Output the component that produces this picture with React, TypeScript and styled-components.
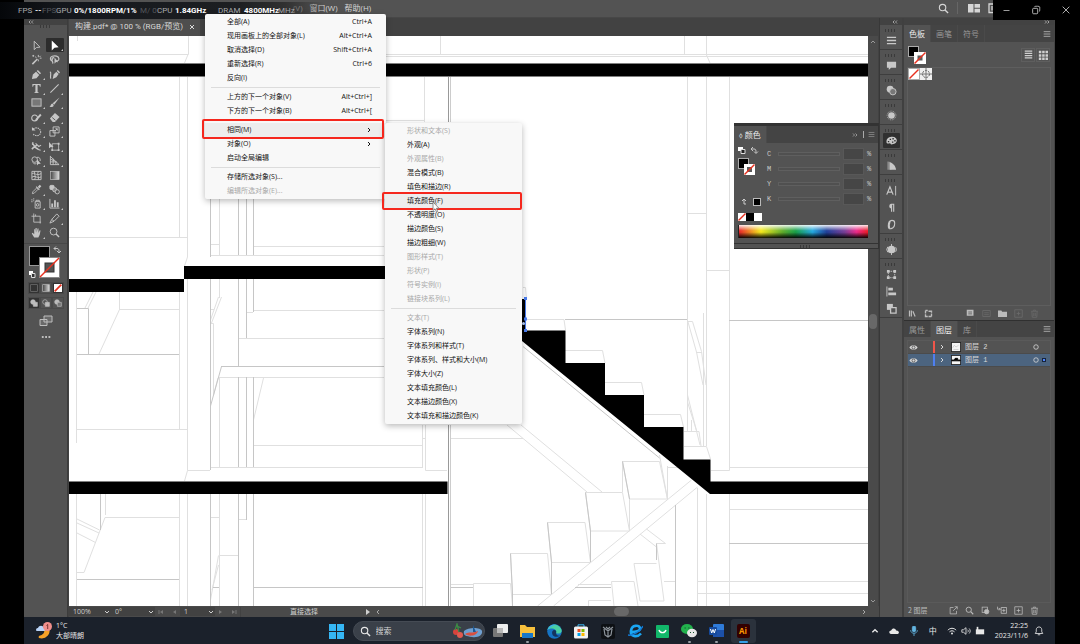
import React from "react";
import styled, { createGlobalStyle } from "styled-components";

const uiFont = '"Open Sans", "Noto Sans CJK SC", sans-serif';
const cjkFont = '"Noto Sans CJK SC", sans-serif';

const Global = createGlobalStyle`
  *, *::before, *::after { box-sizing: border-box; }
  html, body { margin: 0; padding: 0; background: #000; overflow: hidden; }
  body { font-family: ${uiFont}; font-size: 8px; line-height: 12px; color: #c8c8c8; }
  button, input, select { font: inherit; color: inherit; border: 0; padding: 0; margin: 0; background: none; }
  ul { list-style: none; margin: 0; padding: 0; }
  svg { display: block; flex: none; }
`;

/* ---------- shell ---------- */

const Desktop = styled.div`
  position: relative;
  display: flex;
  flex-direction: column;
  height: 100vh;
  padding: 0 25px 0 24px;
  background: #000;
`;

const MenuBar = styled.header`
  flex: none;
  display: flex;
  align-items: center;
  height: 18px;
  padding: 0 55px 1px 269px;
  gap: 7px;
  background: #535353;
  border-bottom: 1px solid #474747;
  color: #d6d6d6;
`;

const MenuTitle = styled.button`
  font-size: 8px;
  line-height: 12px;
  white-space: nowrap;
`;

const MenuBarTools = styled.div`
  display: flex;
  align-items: center;
  gap: 8px;
  margin-left: auto;
`;

const Rule = styled.span`
  width: 1px;
  height: 12px;
  margin: 0 2px 0 0;
  background: #666;
`;

const WindowControls = styled.div`
  position: absolute;
  top: 0;
  right: 0;
  display: flex;
  justify-content: space-between;
  align-items: center;
  width: 87px;
  height: 20px;
  padding: 0 9px;
  background: #000;
  color: #d0d0d0;
`;

const IconButton = styled.button`
  display: flex;
  align-items: center;
  justify-content: center;
`;

const Monitor = styled.div`
  position: absolute;
  z-index: 5;
  top: 2px;
  left: 0;
  display: flex;
  align-items: center;
  width: 330px;
  height: 17px;
  padding-left: 18px;
  background: linear-gradient(90deg, #05070a 0, #14171c 60px, #1d1f22 240px, rgba(40, 40, 40, 0.8) 285px, rgba(83, 83, 83, 0) 325px);
  font: 8px/12px Roboto, sans-serif;
  white-space: nowrap;
`;

const Reading = styled.span<{ $w: number; $tone?: "value" | "faint" }>`
  flex: none;
  width: ${(p) => p.$w}px;
  color: ${(p) => (p.$tone === "value" ? "#fff" : p.$tone === "faint" ? "#54575c" : "#a9abad")};
  font-weight: ${(p) => (p.$tone === "value" ? 700 : 400)};
`;

const Workspace = styled.div`
  flex: 1;
  min-height: 0;
  display: grid;
  grid-template-columns: 44px minmax(0, 1fr) 25px 151px;
  background: #535353;
`;

/* ---------- tool bar ---------- */

const ToolBar = styled.aside`
  display: flex;
  flex-direction: column;
  align-items: center;
  background: #535353;
  border-right: 1px solid #3c3c3c;
`;

const Collapse = styled.div<{ $right?: boolean }>`
  align-self: stretch;
  display: flex;
  align-items: center;
  justify-content: ${(p) => (p.$right ? "flex-end" : "flex-start")};
  height: 7px;
  padding: 0 4px;
  background: #424242;
  color: #bbb;
`;

const Grip = styled.div`
  width: 12px;
  height: 3px;
  background: repeating-linear-gradient(90deg, #3a3a3a 0 1px, transparent 1px 3px);
`;

const ToolGrid = styled.div`
  display: grid;
  grid-template-columns: 18px 18px;
  grid-template-rows: repeat(14, 1fr);
  height: 202px;
  margin-top: 10px;
`;

const Tool = styled.button<{ $active?: boolean }>`
  position: relative;
  display: flex;
  align-items: center;
  justify-content: center;
  border-radius: 1px;
  background: ${(p) => (p.$active ? "#2c2c2c" : "transparent")};
  color: ${(p) => (p.$active ? "#fff" : "#c6c6c6")};
`;

const Corner = styled.span`
  position: absolute;
  right: 1px;
  bottom: 1px;
  border: 1px solid transparent;
  border-right-color: #c6c6c6;
  border-bottom-color: #c6c6c6;
`;

const Inks = styled.div`
  align-self: stretch;
  margin-top: 3px;
  padding: 1px 4px 0;
  border-top: 1px solid #474747;
`;

const Row3 = styled.div`
  display: grid;
  grid-template-columns: repeat(3, 12px);
  height: 12px;
  margin-top: 3px;
`;

const Mode = styled.button<{ $on?: boolean }>`
  display: flex;
  align-items: center;
  justify-content: center;
  border: 1px solid #4a4a4a;
  background: ${(p) => (p.$on ? "#333" : "transparent")};
  color: #bdbdbd;
`;

const ToolExtra = styled.button`
  height: 12px;
  margin-top: 5px;
  color: #bdbdbd;
`;

/* ---------- document ---------- */

const Document = styled.main`
  display: flex;
  flex-direction: column;
  min-width: 0;
  min-height: 0;
  padding-left: 1px;
  background: #424242;
`;

const Tabs = styled.div`
  flex: none;
  display: flex;
  height: 18px;
`;

const DocTab = styled.div`
  display: flex;
  align-items: center;
  gap: 6px;
  padding: 0 5px 0 6px;
  background: #4e4e4e;
  color: #d8d8d8;
  font: 8px/12px Roboto, "Noto Sans CJK SC", sans-serif;
  white-space: nowrap;
`;

const View = styled.div`
  flex: 1;
  min-height: 0;
  display: grid;
  grid-template-columns: minmax(0, 1fr) 10px;
  margin-right: 1px;
`;

const Artboard = styled.svg`
  width: 100%;
  height: 100%;
  min-height: 0;
  background: #fff;
`;

const ScrollBar = styled.div`
  display: flex;
  flex-direction: column;
  align-items: center;
  justify-content: space-between;
  padding: 3px 0 2px;
  background: #4a4a4a;
  color: #999;
`;

const Thumb = styled.span<{ $w: number; $h: number }>`
  width: ${(p) => p.$w}px;
  height: ${(p) => p.$h}px;
  border-radius: 5px;
  background: #686868;
`;

const StatusBar = styled.div`
  flex: none;
  display: flex;
  align-items: center;
  height: 11px;
  background: #4a4a4a;
  color: #d0d0d0;
  font: 7px/10px ${uiFont};
`;

const Field = styled.label<{ $w: number }>`
  display: flex;
  align-items: center;
  justify-content: space-between;
  width: ${(p) => p.$w}px;
  height: 9px;
  padding: 0 1px 0 4px;
  background: #424242;

  select { appearance: none; flex: 1; min-width: 0; line-height: 9px; }
`;

const Pager = styled.div`
  display: flex;
  justify-content: space-around;
  width: 25px;
  color: #777;
`;

const ToolName = styled.div`
  width: 125px;
  padding-left: 2px;
  text-align: center;
  border-left: 1px solid #424242;
`;

const HScroll = styled.div`
  flex: 1;
  display: flex;
  align-items: center;
  justify-content: space-between;
  padding: 0 12px 0 4px;
  color: #aaa;
`;

/* ---------- dock and panels ---------- */

const Dock = styled.nav`
  display: flex;
  flex-direction: column;
  background: #535353;
  border-left: 1px solid #383838;
  border-right: 2px solid #404040;
`;

const DockGroup = styled.div`
  display: flex;
  flex-direction: column;
  align-items: center;
  padding-top: 4px;
  border-bottom: 1px solid #3e3e3e;
`;

const DockButton = styled.button<{ $on?: boolean }>`
  display: flex;
  align-items: center;
  justify-content: center;
  width: 17px;
  height: 15px;
  margin: 1px 0;
  border-radius: 1px;
  background: ${(p) => (p.$on ? "#303030" : "transparent")};
  color: #c8c8c8;
`;

const Panels = styled.aside`
  display: flex;
  flex-direction: column;
  min-height: 0;
  border-right: 1px solid #444;
`;

const PanelTabs = styled.div`
  flex: none;
  display: flex;
  align-items: stretch;
  height: 17px;
  padding-right: 3px;
  background: #444;
`;

const PanelTab = styled.button<{ $on?: boolean }>`
  padding: 0 5px;
  font: 8px/15px ${cjkFont};
  background: ${(p) => (p.$on ? "#535353" : "transparent")};
  color: ${(p) => (p.$on ? "#ececec" : "#999")};
  border-right: 1px solid #4a4a4a;
`;

const PanelMenu = styled.button`
  margin-left: auto;
  align-self: center;
  color: #aaa;
`;

const FloatMenu = styled.button`
  align-self: center;
  margin-left: 5px;
  padding-left: 4px;
  border-left: 1px solid #aaa;
  color: #888;
`;

const SwatchHead = styled.div`
  display: flex;
  align-items: center;
  height: 25px;
  padding: 0 4px 0 4px;
  gap: 1px;
`;

const ViewButton = styled.button`
  display: flex;
  align-items: center;
  justify-content: center;
  width: 14px;
  height: 14px;
  border: 1px solid #5e5e5e;
  color: #d0d0d0;
`;

const Spacer = styled.span`
  flex: 1;
`;

const SwatchList = styled.div`
  display: flex;
  align-items: flex-start;
  height: 239px;
  margin: 0 3px;
  border: 1px solid #5e5e5e;
`;

const PanelFooter = styled.div<{ $gap: number }>`
  flex: none;
  display: flex;
  align-items: center;
  justify-content: flex-end;
  gap: ${(p) => p.$gap}px;
  height: 14px;
  padding: 0 15px 0 4px;
  color: #bcbcbc;
  font: 7px/12px ${cjkFont};
`;

const Faded = styled.span`
  color: #6c6c6c;
`;

const LayerTabs = styled(PanelTabs)`
  border-top: 1px solid #303030;
`;

const LayerList = styled.ul`
  flex: 1;
  margin: 3px 3px 0;
  border: 1px solid #5a5a5a;
`;

const Layer = styled.li<{ $on?: boolean }>`
  display: grid;
  grid-template-columns: 24px 6px 12px 1fr auto;
  align-items: center;
  height: 13px;
  padding: 0 0 0 1px;
  background: ${(p) => (p.$on ? "#4c647f" : "transparent")};
  border-bottom: 1px solid #4b4b4b;
  color: #d8d8d8;
  font: 7px/12px "Liberation Mono", ${cjkFont};
`;

const LayerColor = styled.span<{ $c: string }>`
  width: 2px;
  height: 12px;
  background: ${(p) => p.$c};
`;

const ThumbWrap = styled.span`
  display: flex;
  align-items: center;
  gap: 4px;
`;

const Targets = styled.span`
  display: flex;
  align-items: center;
  gap: 3px;
  width: 17px;
`;

const Selected = styled.span`
  width: 4px;
  height: 4px;
  border: 1px solid #16243c;
  background: #4f86ff;
`;

/* ---------- floating colour panel ---------- */

const ColorPanel = styled.section`
  position: absolute;
  top: 123px;
  right: 201px;
  width: 145px;
  height: 126px;
  display: flex;
  flex-direction: column;
  background: #535353;
  border-top: 3px solid #333;
  border-right: 1px solid #333;
  border-bottom: 1px solid #333;
`;

const ColorBody = styled.div`
  flex: 1;
  display: grid;
  grid-template-columns: 29px 1fr;
  padding: 3px 7px 0 4px;
`;

const Channels = styled.div`
  display: flex;
  flex-direction: column;
`;

const Channel = styled.label`
  display: grid;
  grid-template-columns: 8px 62px 21px 1fr;
  align-items: center;
  height: 15px;
  column-gap: 3px;
  font: 7px/12px "Liberation Mono", monospace;
`;

const Slider = styled.input`
  appearance: none;
  width: 62px;
  height: 4px;
  border: 1px solid #5f5f5f;
  background: #505050;
  &::-webkit-slider-thumb { appearance: none; width: 0; height: 0; }
`;

const Amount = styled.input`
  width: 21px;
  height: 12px;
  border: 1px solid #585858;
  background: #464646;
`;

const Spectrum = styled.div`
  height: 13px;
  margin: 0 10px 5px 4px;
  border-left: 1px solid #222;
  background:
    linear-gradient(180deg, rgba(255, 255, 255, 0.9) 0, rgba(255, 255, 255, 0) 45%, rgba(0, 0, 0, 0) 55%, rgba(0, 0, 0, 0.95) 100%),
    linear-gradient(90deg, #e8262a 0, #f6ea1c 17%, #5fae2c 34%, #19a04a 44%, #25a9e0 57%, #20409a 68%, #7a3f98 82%, #ec2a8b 91%, #ed1c24 100%);
`;

const PanelFoot = styled.div`
  display: flex;
  justify-content: center;
  height: 5px;
  padding-top: 1px;
  border-top: 1px solid #333;
`;

/* ---------- drop-down menus ---------- */

const Menu = styled.div<{ $x: number; $y: number; $w: number }>`
  position: absolute;
  z-index: 6;
  top: ${(p) => p.$y}px;
  left: ${(p) => p.$x}px;
  width: ${(p) => p.$w}px;
  padding: 1px 0;
  border-radius: 2px;
  background: #f8f8f8;
  box-shadow: 0 2px 6px rgba(0, 0, 0, 0.28);
  font: 7px/14px ${uiFont};
`;

const MenuItem = styled.button<{ $on?: boolean }>`
  display: flex;
  justify-content: space-between;
  align-items: center;
  width: 100%;
  height: 14px;
  padding: 0 14px 0 22px;
  background: ${(p) => (p.$on ? "#ededed" : "transparent")};
  color: #111;
  white-space: nowrap;
  &:disabled { color: #a8a8a8; }
`;

const Separator = styled.hr`
  height: 1px;
  margin: 2px 6px;
  border: 0;
  background: #dcdcdc;
`;

const Gap = styled.div`
  height: 5px;
`;

const Marker = styled.span<{ $x: number; $y: number; $w: number; $h: number }>`
  position: absolute;
  z-index: 7;
  top: ${(p) => p.$y}px;
  left: ${(p) => p.$x}px;
  width: ${(p) => p.$w}px;
  height: ${(p) => p.$h}px;
  border: 2px solid #f5271d;
  border-radius: 2px;
  pointer-events: none;
`;

const Pointer = styled.svg`
  position: absolute;
  z-index: 8;
  top: 201px;
  left: 432px;
`;

/* ---------- task bar ---------- */

const TaskBar = styled.footer`
  flex: none;
  position: relative;
  display: flex;
  align-items: center;
  justify-content: space-between;
  height: 27px;
  padding: 1px 11px 0 12px;
  background: #1b212b;
  color: #e8e8e8;
`;

const Weather = styled.div`
  display: flex;
  align-items: center;
  gap: 3px;
  width: 260px;
  font: 7px/10px ${uiFont};
`;

const Apps = styled.div`
  position: absolute;
  left: 50%;
  top: 1px;
  display: flex;
  align-items: center;
  height: 26px;
  transform: translateX(-50%);
`;

const AppButton = styled.button<{ $on?: boolean; $dot?: boolean }>`
  position: relative;
  display: flex;
  align-items: center;
  justify-content: center;
  width: 25px;
  height: 24px;
  margin: 0 1px;
  border-radius: 3px;
  background: ${(p) => (p.$on ? "#2b323c" : "transparent")};

  &::after {
    content: "";
    position: absolute;
    bottom: 0;
    width: ${(p) => (p.$on ? 9 : 3)}px;
    height: ${(p) => (p.$on || p.$dot ? 2 : 0)}px;
    border-radius: 1px;
    background: ${(p) => (p.$on ? "#35a0e8" : "#9a9fa6")};
  }
`;

const Search = styled.label`
  display: flex;
  align-items: center;
  gap: 5px;
  width: 132px;
  height: 20px;
  margin: 0 2px 0 3px;
  padding: 0 1px 0 6px;
  border: 1px solid #454b54;
  border-radius: 10px;
  background: #3a4049;

  input { flex: 1; min-width: 0; font: 8px/12px ${cjkFont}; }
  input::placeholder { color: #d5d5d5; opacity: 1; }
`;

const Tray = styled.div`
  display: flex;
  align-items: center;
  gap: 10px;
`;

const Clock = styled.div`
  text-align: right;
  font: 7px/10px ${uiFont};
`;

const Quick = styled.div`
  display: flex;
  gap: 4px;
`;

const AiBadge = styled.span`
  width: 13px;
  height: 14px;
  border-radius: 2px;
  background: #330000;
  color: #ff9a00;
  font: 700 8px/14px "Open Sans", sans-serif;
  text-align: center;
`;

const Mic = styled.span`
  color: #63b4e0;
`;

const Bell = styled.button`
  margin-left: -4px;
`;

/* ---------- icons ---------- */

type IconProps = { size?: number; box?: number; children: React.ReactNode };

const Icon = ({ size = 12, box = 12, children }: IconProps) => (
  <svg width={size} height={size} viewBox={`0 0 ${box} ${box}`} fill="none" stroke="currentColor" strokeWidth="1" aria-hidden="true">
    {children}
  </svg>
);

const solid = { fill: "currentColor", stroke: "none" };

const Chevron = ({ d, size = 6 }: { d: "up" | "down" | "left" | "right"; size?: number }) => {
  const paths = { up: "M1 4 3 2 5 4", down: "M1 2 3 4 5 2", left: "M4 1 2 3 4 5", right: "M2 1 4 3 2 5" };
  return <Icon size={size} box={6}><path d={paths[d]} /></Icon>;
};

const Double = ({ flip }: { flip?: boolean }) => (
  <Icon size={6} box={6}>
    <path d={flip ? "M1 1.500 2.500 3 1 4.500M3.500 1.500 5 3 3.500 4.500" : "M2.500 1.500 1 3 2.500 4.500M5 1.500 3.500 3 5 4.500"} strokeWidth=".8" />
  </Icon>
);

const Lines = ({ size = 8 }: { size?: number }) => (
  <Icon size={size}><path d="M1 2.500H11M1 6H11M1 9.500H11" strokeWidth="1.400" /></Icon>
);

const Lens = ({ size = 11 }: { size?: number }) => (
  <Icon size={size}><circle cx="5" cy="5" r="3.500" strokeWidth="1.200" /><path d="M7.600 7.600 11 11" strokeWidth="1.500" /></Icon>
);

const Trash = () => <Icon size={9}><path d="M1.500 3H10.500M4.500 2.500V1.500H7.500V2.500M2.500 3.500 3 11H9L9.500 3.500M5 5V9.500M7 5V9.500" /></Icon>;

const toolIcons: { name: string; art: React.ReactNode; more?: boolean }[] = [
  { name: "选择", art: <path d="M3.500 1.300V10.500L6 8.200 9.800 7.800Z" /> },
  { name: "直接选择", art: <path d="M3 .5V11.500L6 8.500 10.500 8Z" {...solid} />, more: true },
  { name: "魔棒", art: <><path d="M1.500 11 7 5.500" strokeWidth="1.700" /><path d="M8 1V3.500M8 6V8M4.500 3 6 4M9.500 4.500H11.500M10.500 2 9.300 3.300M2.500 1V3M1.500 2H3.500" /></> },
  { name: "套索", art: <><path d="M4 8C1 7 .5 3.500 3.500 2.500S10.500 2 10.800 5 8 7.500 8 7.500M4 6.500C2.500 5 3.500 4 5.500 4M3.500 6.500C2.500 8 5 8 4 10.500" strokeWidth="1.300" /><path d="M6 3.500V10.500L7.700 8.800 10 9Z" {...solid} /></> },
  { name: "钢笔", art: <path d="M1 11 2 6 5.500 3 9 6.500 6 10ZM6.200 2.300 7.500 1 11 4.500 9.700 5.800Z" {...solid} />, more: true },
  { name: "曲率", art: <><path d="M4 11 5 6 8 3 10.500 5.500 8 9ZM8.500 2.300 9.500 1 12 3.500 11 5Z" {...solid} /><path d="M1 3C3.500 4 .5 8 2 10.500" strokeWidth="1.300" /></> },
  { name: "文字", art: <path d="M1.500 1H10.500V4H9.700C9.500 2.500 9 2.200 7.200 2.200V9.300C7.200 10.200 7.600 10.300 8.500 10.400V11H3.500V10.400C4.500 10.300 4.800 10.200 4.800 9.300V2.200C3 2.200 2.500 2.500 2.300 4H1.500Z" {...solid} />, more: true },
  { name: "直线段", art: <path d="M1.500 10.500 10.500 1.500" strokeWidth="1.200" />, more: true },
  { name: "矩形", art: <rect x="1" y="2" width="10" height="8" fill="#777" />, more: true },
  { name: "画笔", art: <><path d="M11.500 .5 5.700 8.500 4 6.700Z" {...solid} /><path d="M3.500 7C5.500 7.500 5.500 10 4 10.700 3 11.200 1.500 11 .5 10.800 2 10 1.500 7.500 3.500 7Z" {...solid} /></>, more: true },
  { name: "Shaper", art: <><circle cx="4" cy="6.500" r="3.200" strokeWidth="1.200" /><path d="M4.500 9.500 5 7.500 10 2 11.500 3.500 6.500 9Z" {...solid} /></>, more: true },
  { name: "橡皮擦", art: <><path d="M1 7 6.500 1 11.500 5.500 6.500 11H4Z" {...solid} /><path d="M3.500 6 7 9" stroke="#535353" /></>, more: true },
  { name: "旋转", art: <><path d="M2.500 3.500C5 .8 10.500 2 10.500 6.500S5 11.500 2.500 9" strokeDasharray="1.600 .9" strokeWidth="1.200" /><path d="M1 1V5H5Z" {...solid} /></>, more: true },
  { name: "比例缩放", art: <><path d="M4.500 1H11V7.500H4.500ZM1 5H6.500V11H1Z" /><path d="M6.500 5.500 9 3M7 3H9V5" /></>, more: true },
  { name: "宽度", art: <><path d="M1 3C4 3 4 9 8 8.500M1 9C3 6 5 6 6.500 4.500" strokeWidth="1.700" /><path d="M5 2.500 8.500 6 11 4.500M7 9 10.500 10M2 1V4" strokeWidth="1.200" /></>, more: true },
  { name: "自由变换", art: <><path d="M3.500 3H10.500V10H3.500Z" strokeWidth=".9" /><path d="M0 1V8L2 6.500 5 6.500Z" {...solid} /><path d="M9.500 2H11.500V4H9.500ZM9.500 9H11.500V11H9.500ZM2.500 9H4.500V11H2.500Z" {...solid} /></>, more: true },
  { name: "形状生成器", art: <><circle cx="4" cy="5" r="3" /><path d="M6.500 2.500C9.500 2 10.500 4.500 10 6.500M2 8C3 10 5 10 6 9" /><path d="M6.500 4.500V11.500L8 9.800 10.700 9.500Z" {...solid} /></>, more: true },
  { name: "透视网格", art: <path d="M1.500 1V10.500H11L1.500 1.500M4.500 4V10.500M7.500 7V10.500M1.500 4.500 6 6.500M1.500 7.500H8" />, more: true },
  { name: "网格", art: <path d="M1 1.500H11V10.500H1ZM1 4C4 2 5 7 11 4M1 8C4 5 7 10 11 7.500M4 1.500C3 5 6 7 4 10.500M8 1.500C6 5 9 7 8 10.500" /> },
  { name: "渐变", art: <><defs><linearGradient id="toolShade"><stop stopColor="#444" /><stop offset="1" stopColor="#ddd" /></linearGradient></defs><rect x="1.500" y="1.500" width="9.500" height="9" fill="url(#toolShade)" strokeWidth=".7" /></> },
  { name: "吸管", art: <><path d="M1.500 10.500 2 8.500 6.500 4 8 5.500 3.500 10Z" strokeWidth=".9" /><path d="M6 2.500 9.500 6 8.700 6.800 5.200 3.300ZM7.500 3 9.500 .8 11.300 2.500 9 4.800Z" {...solid} /></>, more: true },
  { name: "混合", art: <><rect x="1" y="1.500" width="4.500" height="4.500" rx="1" fill="currentColor" /><rect x="4" y="4" width="4.500" height="4.500" rx="2" fill="#888" /><circle cx="9" cy="8.500" r="2.300" fill="#535353" /></> },
  { name: "符号喷枪", art: <><path d="M4.500 4H10V11H4.500ZM5.500 4V2.500H9V4" /><circle cx="7.200" cy="7.500" r="1.400" /><path d="M.5 2H1.500M2.500 1H3.500M.5 4H1.500M2.500 3H3.500" strokeWidth="1.200" /></>, more: true },
  { name: "柱形图", art: <><path d="M1 1V11H11.500" /><path d="M2.500 6H4.500V10H2.500ZM5.500 2.500H7.500V10H5.500ZM8.500 4.500H10.500V10H8.500Z" {...solid} /></>, more: true },
  { name: "画板", art: <path d="M3 .5V10H11M.5 3.500H10V11.500M5 3.500V1.500" strokeWidth=".9" /> },
  { name: "切片", art: <path d="M1 11 3 7 8.500 1 11 3.500 5.500 9ZM3 7 5.500 9" />, more: true },
  { name: "抓手", art: <path d="M3.500 11.500 .8 7 1.800 6.300 3.500 8V2.500H4.500V6L5 1H6.200V6L7.200 1.500H8.200V6.500L9.500 3.500 10.400 3.800 9.500 8.500 8 11.500Z" {...solid} />, more: true },
  { name: "缩放", art: <><circle cx="5" cy="5" r="3.700" /><path d="M7.700 7.700 11 11" strokeWidth="1.600" /></> },
];

/* Filled square with an unpainted outline square in front of it. */
const InkPair = () => (
  <svg width="18" height="18" viewBox="0 0 18 18" aria-hidden="true">
    <rect x=".5" y=".5" width="10" height="10" fill="#000" stroke="#aaa" />
    <rect x="6" y="6" width="12" height="12" fill="#fff" />
    <rect x="9.500" y="9.500" width="5" height="5" fill="#5a5a5a" />
    <path d="M6.500 17.500 17.500 6.500" stroke="#e8301f" strokeWidth="1.500" />
  </svg>
);

const dockGroups: { name: string; on?: boolean; art: React.ReactNode }[][] = [
  [{ name: "属性", art: <path d="M1 2.500H11M1 6H11M1 9.500H11" strokeWidth="1.400" /> }],
  [{ name: "注释", art: <path d="M1 2H11V8.500H5.500L3 11V8.500H1Z" {...solid} /> }],
  [{ name: "透明度", art: <><circle cx="4.500" cy="4.500" r="3.700" {...solid} /><circle cx="7.500" cy="7.300" r="3.500" fill="#777" /></> }],
  [{ name: "外观", art: <><circle cx="6" cy="6" r="3.600" {...solid} /><circle cx="6" cy="6" r="4.800" strokeDasharray="1 1" strokeWidth=".8" /></> }],
  [{ name: "颜色", on: true, art: <path fillRule="evenodd" d="M.5 7.500C.5 3 4 2 7 2S11.800 4 11.800 6 10 9.800 7 10.200 5.500 8.500 4 9 .5 9.500.5 7.500ZM2 6.500V8H3.500V6.500ZM4 4V5.500H5.500V4ZM7 3.300V5H8.500V3.300ZM9 5.500V7H10.500V5.500ZM6.500 7V8.500H8V7Z" {...solid} /> }],
  [{ name: "渐变", art: <><path d="M1.500 1.500V10.500H6V3C4.500 2 3 1.500 1.500 1.500Z" fill="#8a8a8a" stroke="none" /><path d="M4 2.500C8 3.500 10.500 7 11 10.500H4Z" {...solid} /></> }],
  [
    { name: "字符", art: <><path d="M.8 10.500 4.300 2 7.800 10.500M2.200 7.700H6.400" strokeWidth="1.300" /><path d="M10.500 1V11.500" /></> },
    { name: "段落", art: <path d="M9 2H5.500A2.700 2.700 0 0 0 5.500 7.200V10.500H6.700V3H7.800V10.500H9Z" {...solid} /> },
    { name: "OpenType", art: <path d="M6.500 1.500C3.500 1.500 2.500 5 2.500 7.500S3.500 11 5.500 10.500 9.500 7.500 9.500 4.500 8 1.500 6.500 1.500ZM4.500 2.500C3.500 5 3.300 8 4 10" strokeWidth="1.200" /> },
  ],
  [{ name: "资源", art: <><circle cx="6" cy="6" r="4.200" {...solid} /><path d="M6 0V12M10.500 3.500 11.500 6 10.500 8.500M2 3 .7 6 2 9" /></> }],
  [
    { name: "变换", art: <><rect x="2.500" y="2.500" width="7" height="7" strokeDasharray="1.500 1" /><path d="M1 1H4V4H1ZM8 1H11V4H8ZM1 8H4V11H1ZM8 8H11V11H8Z" {...solid} /></> },
    { name: "对齐", art: <><path d="M1 .5V11.500" /><path d="M2.500 2H7.500V5H2.500ZM2.500 7H11V10H2.500Z" {...solid} /></> },
    { name: "路径查找器", art: <><path d="M1 1H7.500V7.500H1Z" {...solid} /><path d="M5 5H11V11H5Z" fill="#535353" strokeWidth="1.400" /></> },
  ],
];

/* ---------- menu data ---------- */

type Entry = { label: string; keys?: string; sub?: boolean; off?: boolean; on?: boolean } | "line" | "gap";

const selectMenu: Entry[] = [
  { label: "全部(A)", keys: "Ctrl+A" },
  { label: "现用画板上的全部对象(L)", keys: "Alt+Ctrl+A" },
  { label: "取消选择(D)", keys: "Shift+Ctrl+A" },
  { label: "重新选择(R)", keys: "Ctrl+6" },
  { label: "反向(I)" },
  "line",
  { label: "上方的下一个对象(V)", keys: "Alt+Ctrl+]" },
  { label: "下方的下一个对象(B)", keys: "Alt+Ctrl+[" },
  "gap",
  { label: "相同(M)", sub: true, on: true },
  { label: "对象(O)", sub: true },
  { label: "启动全局编辑" },
  "line",
  { label: "存储所选对象(S)..." },
  { label: "编辑所选对象(E)...", off: true },
];

const sameMenu: Entry[] = [
  { label: "形状和文本(S)", off: true },
  { label: "外观(A)" },
  { label: "外观属性(B)", off: true },
  { label: "混合模式(B)" },
  { label: "填色和描边(R)" },
  { label: "填充颜色(F)", on: true },
  { label: "不透明度(O)" },
  { label: "描边颜色(S)" },
  { label: "描边粗细(W)" },
  { label: "图形样式(T)", off: true },
  { label: "形状(P)", off: true },
  { label: "符号实例(I)", off: true },
  { label: "链接块系列(L)", off: true },
  "line",
  { label: "文本(T)", off: true },
  { label: "字体系列(N)" },
  { label: "字体系列和样式(T)" },
  { label: "字体系列、样式和大小(M)" },
  { label: "字体大小(Z)" },
  { label: "文本填充颜色(L)" },
  { label: "文本描边颜色(X)" },
  { label: "文本填充和描边颜色(K)" },
];

const Entries = ({ items }: { items: Entry[] }) => (
  <>
    {items.map((item, i) => {
      if (item === "line") return <Separator key={i} />;
      if (item === "gap") return <Gap key={i} />;
      return (
        <MenuItem key={i} role="menuitem" disabled={item.off} $on={item.on}>
          <span>{item.label}</span>
          {item.keys && <span>{item.keys}</span>}
          {item.sub && <Chevron d="right" />}
        </MenuItem>
      );
    })}
  </>
);

/* ---------- drawing ---------- */

const pale = [
  "M77.500 36V41M69 54.500H188.500V36M188 54.500 184.500 63M179.500 77V237M187.500 77V257L184.500 266M69 237.500H188",
  "M76.500 292V443M76.500 494V606M85 308 93 292M88 308 96 292M99 354 119.500 309.500V292M119 309.500H179M179.500 292V429M77 429.500H188M187.500 279V470.500H210M187.500 470.500 184.500 481",
  "M219.500 198V255M210 244.500H219M210 255.500H384M253 246.500H384M219.500 279V298M219.500 377V467M246.500 312.500H253M253 310.500H384M239 338.500H384M219 377.500H384",
  "M221.500 297 211.500 323M218.500 297 210.500 320M210 309.500H214M210 323.500H213.500V395M218 378 213.500 395M263.500 378 253.500 420M253 445.500H423M210 467.500H422M422.500 425V468M425.500 425V470.500H447",
  "M105.500 494V515M77 519 99.500 530M77 523 99 533M77 533 95.500 542.500M105 517.500 84 572.500H77M105 517.500H179M179.500 494V606M187.500 494V606M219.500 494V606M210 517.500H219M238 519.500H247M219 555.500H238",
  "M218.500 555.500 210.500 600M218.500 565 212 590M422.500 494V606M425.500 494V606M423 438.500H425M450 438.500H523",
  "M386 54.500H868M386 56.500H868M684.500 36V55M706.500 36V55L710 63M424.500 77V122M440.500 36V54M386 120.500H425M687.500 77V432M706.500 77V446M729.500 77V470.500H711M687 213.500H706M706 270.500H729",
  "M523 287.500H525.500L526.500 299M526 319.500H564L565.500 330M565 350.500H602.500L605 363M605 382.500H641.500L644 395M644 414.500H680.500L683.500 427M684 431.500H699L701 446M684 446.500H706.500L710.500 459",
  "M703.500 313V446M688 321.500H692.500L701.500 351.500 706 385M688 322 696.500 352 703 385M696 352.500H702M687.500 395 700 445M687.500 402 697 432M691.500 420V432",
  "M507 425 587 492M521 425 602 492M659.500 455 667.500 499.500V466M667 467.500H680M729 467.500H868M691.500 480 537.500 606M697.500 487 553.500 606",
  "M622.500 461.500H659.500L667.500 499H629.500ZM585.500 492.500H622.500L629.500 531H590.500ZM547.500 522.500H585L590.500 562.500H551.500ZM510.500 553.500H547.500L551.500 594.500H512.500ZM473.500 606V583.500H510.500L512.500 606M629.500 499V531M622.500 461V492",
  "M697.500 488V606M706.500 494V606M729.500 494V606M729 509.500H868M675 581.500H664M697 581.500H868M697 593.500H868",
  "M640 534 656.500 547M646.500 529 665.500 543.500H656.500L664 601H640L634 563.500H656.500M614 606 611.500 581.500H634L638 606M450 584.500H473M578 584.500H611M588.500 606V600.500H611",
];

const firm = [
  "M210.500 198V257M238.500 198V255M246.500 198V255M253.500 198V255M210.500 279V470M238.500 279V367M238.500 377V467M246.500 279V338M246.500 377V467M253.500 279V312M253.500 377V467",
  "M77 308.500H88.500V354M77 354.500H179M77 579.500H179M221 366.500H384M221.500 366.500 210.500 406M100.500 494V530M210.500 494V606M238.500 494V606M246.500 494V520M253.500 494V606M213 587.500H219M253 587.500H423",
  "M565 319.500H687M729 320.500H868M523 346.500 659.500 458M622.500 461.500 629.500 499M585.500 492.500 590.500 531M551.500 562V594M590.500 531V562M512.500 594V606M510.500 553.500 512.500 594M547.500 522.500 551.500 562",
  "M675.500 505V606M729 543.500H868M450 587.500H473M575 587.500H611M656.500 543.500V560",
];

const Drawing = () => (
  <Artboard viewBox="69 36 799 570" preserveAspectRatio="xMinYMin slice" fill="none">
    {pale.map((d, i) => <path key={i} d={d} stroke="#e0e0e0" />)}
    {firm.map((d, i) => <path key={i} d={d} stroke="#c6c6c6" />)}
    <path d="M448.500 77V122M448.500 425V606" stroke="#999" />
    <path d="M450.500 77V122M450.500 425V606" stroke="#ccc" />
    <g fill="#000">
      <path d="M69 63.500H868V76.500H69ZM184 266H400V279H184ZM69 279H184V292H69ZM69 481.500H447.500V494H69Z" />
      <path d="M522 299H526V330.500H565.500V363H605V395H644V427H683.500V459.500H710.500V481.500H868V494H710L522 341Z" />
    </g>
    <path d="M525.500 298V330" stroke="#4a7df0" />
    <path d="M524 297H527V300H524ZM524 317.500H527V320.500H524ZM524 329H527V332H524Z" fill="#4a7df0" />
    <circle cx="523.500" cy="323.500" r="1.500" fill="#b9d2ff" />
  </Artboard>
);

const Thumbnail = ({ dark, label }: { dark?: boolean; label: string }) => (
  <ThumbWrap>
    <Icon size={10}>
      <rect x=".5" y=".5" width="11" height="11" fill="#f4f4f4" stroke="#222" />
      {dark ? <path d="M1 6H4L5 4H8V6H11V7H1Z" fill="#000" stroke="#000" /> : <path d="M2 7 4 4 6 6 9 4M3 9H9" stroke="#bbb" strokeWidth=".7" />}
    </Icon>
    <span>{label}</span>
  </ThumbWrap>
);

export default function App() {
  return (
    <Desktop>
      <Global />
      <MenuBar>
        <MenuTitle>(V)</MenuTitle>
        <MenuTitle>窗口(W)</MenuTitle>
        <MenuTitle>帮助(H)</MenuTitle>
        <MenuBarTools>
          <IconButton aria-label="搜索"><Lens /></IconButton>
          <Rule />
          <IconButton aria-label="排列文档"><Icon><path d="M0 2H5.500V10.500H0ZM6.500 2H12V5.800H6.500ZM6.500 6.800H12V10.500H6.500Z" {...solid} /></Icon></IconButton>
          <IconButton aria-label="工作区"><Icon><path d="M1 2H14V10.500H1ZM4 4V8.500" strokeWidth="1.300" /></Icon></IconButton>
        </MenuBarTools>
      </MenuBar>
      <WindowControls>
        <IconButton aria-label="最小化"><Icon size={9}><path d="M2 6H10" /></Icon></IconButton>
        <IconButton aria-label="还原"><Icon size={10}><rect x="2" y="4" width="6" height="6.500" rx="1" /><path d="M4 2.500C4.500 1.500 5 1.500 8 1.500S10.500 2.500 10.500 4.500 10.500 7.500 9.500 8" /></Icon></IconButton>
        <IconButton aria-label="关闭"><Icon size={10}><path d="M2 2 10 10M10 2 2 10" /></Icon></IconButton>
      </WindowControls>

      <Workspace>
        <ToolBar>
          <Collapse><Double /></Collapse>
          <Grip />
          <ToolGrid>
            {toolIcons.map((t, i) => (
              <Tool key={t.name} title={t.name} $active={i === 1}>
                <Icon size={11}>{t.art}</Icon>
                {t.more && <Corner />}
              </Tool>
            ))}
          </ToolGrid>
          <Inks>
            <svg width="34" height="34" viewBox="0 0 34 34" aria-hidden="true">
              <rect x="1.500" y="1.500" width="20" height="19" fill="#000" stroke="#999" />
              <rect x="11.500" y="12.500" width="20" height="20" fill="#fff" stroke="#888" />
              <rect x="17" y="18" width="9" height="9" fill="#535353" stroke="#333" />
              <path d="M12 32 31 13" stroke="#e8301f" strokeWidth="1.500" />
              <path d="M26 3.500H29C31 3.500 31 5 31 7.500M28 1.500 26 3.500 28 5.500M29 6 31 8 33 6" fill="none" stroke="#c6c6c6" />
              <rect x="1" y="26" width="4" height="4" fill="#fff" />
              <path d="M3.500 28.500H7V32.500H3.500Z" fill="#333" stroke="#ddd" />
            </svg>
            <Row3>
              <Mode aria-label="颜色" $on><Icon size={8}><rect x="1" y="1" width="10" height="10" fill="#333" stroke="#777" /></Icon></Mode>
              <Mode aria-label="渐变"><Icon size={8}><rect x="1" y="1" width="10" height="10" fill="url(#toolShade)" /></Icon></Mode>
              <Mode aria-label="无" $on><Icon size={8}><rect width="12" height="12" fill="#fff" stroke="none" /><path d="M1 11 11 1" stroke="#e8301f" strokeWidth="2.500" /></Icon></Mode>
            </Row3>
            <Row3>
              {["正常绘图", "背面绘图", "内部绘图"].map((n, i) => (
                <Mode key={n} aria-label={n} $on={i === 0}>
                  <Icon size={8}><circle cx="4.500" cy="4.500" r="3.500" fill={i === 1 ? "none" : "currentColor"} /><path d="M5 5H11V11H5Z" fill={i === 2 ? "#777" : "#bdbdbd"} /></Icon>
                </Mode>
              ))}
            </Row3>
          </Inks>
          <ToolExtra aria-label="更改屏幕模式"><Icon size={14} box={14}><path d="M5 2H13V8H5ZM1 5.500H8V11.500H1Z" fill="#6a6a6a" /></Icon></ToolExtra>
          <ToolExtra aria-label="编辑工具栏"><Icon size={10}><path d="M1 6H3.200M5 6H7.200M9 6H11.200" strokeWidth="2.200" /></Icon></ToolExtra>
        </ToolBar>

        <Document>
          <Tabs>
            <DocTab>
              <span>构建.pdf* @ 100 % (RGB/预览)</span>
              <IconButton aria-label="关闭文档"><Icon size={6} box={6}><path d="M1 1 5 5M5 1 1 5" /></Icon></IconButton>
            </DocTab>
          </Tabs>
          <View>
            <Drawing />
            <ScrollBar>
              <Chevron d="up" />
              <Thumb $w={8} $h={15} />
              <Chevron d="down" />
            </ScrollBar>
          </View>
          <StatusBar>
            <Field $w={42}>
              <select aria-label="缩放" defaultValue="100%"><option>100%</option></select>
              <Chevron d="down" />
            </Field>
            <Field $w={44}>
              <select aria-label="旋转" defaultValue="0°"><option>0°</option></select>
              <Chevron d="down" />
            </Field>
            <Pager>
              <Icon size={6} box={6}><path d="M1 1V5" /><path d="M5 1V5L2 3Z" {...solid} /></Icon>
              <Icon size={6} box={6}><path d="M5 1V5L2 3Z" {...solid} /></Icon>
            </Pager>
            <Field $w={35}>
              <select aria-label="画板" defaultValue="1"><option>1</option></select>
              <Chevron d="down" />
            </Field>
            <Pager>
              <Icon size={6} box={6}><path d="M1 1V5L4 3Z" {...solid} /></Icon>
              <Icon size={6} box={6}><path d="M1 1V5L4 3Z" {...solid} /><path d="M5 1V5" /></Icon>
            </Pager>
            <ToolName>直接选择</ToolName>
            <Icon size={6} box={6}><path d="M1 0V6L5 3Z" {...solid} /></Icon>
            <HScroll>
              <Chevron d="left" />
              <Thumb $w={15} $h={9} />
              <Chevron d="right" />
            </HScroll>
          </StatusBar>
        </Document>

        <Dock>
          <Collapse $right><Double /></Collapse>
          {dockGroups.map((group, g) => (
            <DockGroup key={g}>
              <Grip />
              {group.map((b) => (
                <DockButton key={b.name} title={b.name} $on={b.on}>
                  <Icon size={11}>{b.art}</Icon>
                </DockButton>
              ))}
            </DockGroup>
          ))}
        </Dock>

        <Panels>
          <Collapse $right><Double flip /></Collapse>
          <PanelTabs>
            <PanelTab $on>色板</PanelTab>
            <PanelTab>画笔</PanelTab>
            <PanelTab>符号</PanelTab>
            <PanelMenu aria-label="面板菜单"><Lines /></PanelMenu>
          </PanelTabs>
          <SwatchHead>
            <InkPair />
            <Spacer />
            <ViewButton aria-label="列表视图"><Icon size={9}><path d="M1 1.500H11M1 4.500H11M1 7.500H11M1 10.500H11" strokeWidth="1.500" /></Icon></ViewButton>
            <ViewButton aria-label="缩略图视图"><Icon size={10}><path d="M1 1H4V4H1ZM5 1H8V4H5ZM9 1H12V4H9ZM1 5H4V8H1ZM5 5H8V8H5ZM9 5H12V8H9ZM1 9H4V12H1ZM5 9H8V12H5ZM9 9H12V12H9Z" {...solid} /></Icon></ViewButton>
          </SwatchHead>
          <SwatchList>
            <Icon><rect x=".5" y=".5" width="11" height="11" fill="#fff" stroke="#aaa" /><path d="M1.500 10.500 10.500 1.500" stroke="#e8301f" strokeWidth="1.400" /></Icon>
            <Icon><rect width="12" height="12" fill="#eee" stroke="none" /><circle cx="6" cy="6" r="3.500" stroke="#555" strokeDasharray="2 1" /><path d="M6 0V12M0 6H12" stroke="#777" /></Icon>
          </SwatchList>
          <PanelFooter $gap={7}>
            <Icon size={9}><path d="M2 2V10M4.500 2V10M6.500 3 9.500 10" strokeWidth="1.600" /></Icon>
            <Icon size={9}><path d="M2 2H5M2 2V6M10 10H6M10 10V6M6 3H10V5M2 7V10H5" strokeWidth="1.800" /></Icon>
            <Spacer />
            <Icon size={9}><path d="M1 1H10V9H1Z" {...solid} /><path d="M3 4H8M3 6.500H8" stroke="#535353" /></Icon>
            <Faded><Icon size={9}><path d="M1 2H11V10H1ZM3 5H9M3 7.500H9" /></Icon></Faded>
            <Icon size={9}><path d="M0 2H4.500L5.500 3.500H12V10.500H0Z" {...solid} /></Icon>
            <Faded><Icon size={9}><path d="M1 1H11V11H1ZM6 3.500V8.500M3.500 6H8.500" /></Icon></Faded>
            <Faded><Trash /></Faded>
          </PanelFooter>

          <LayerTabs>
            <PanelTab>属性</PanelTab>
            <PanelTab $on>图层</PanelTab>
            <PanelTab>库</PanelTab>
            <PanelMenu aria-label="面板菜单"><Lines /></PanelMenu>
          </LayerTabs>
          <LayerList>
            {[{ name: "图层 2", c: "#f0564a", on: false }, { name: "图层 1", c: "#4f7ff0", on: true }].map((l) => (
              <Layer key={l.name} $on={l.on}>
                <Icon size={9}><path d="M.5 6C3 2 9 2 11.500 6 9 10 3 10 .5 6Z" {...solid} /><circle cx="6" cy="6" r="2" fill="#d8d8d8" stroke="#444" /></Icon>
                <LayerColor $c={l.c} />
                <Chevron d="right" />
                <Thumbnail dark={l.on} label={l.name} />
                <Targets>
                  <Icon size={6}><circle cx="6" cy="6" r="4.500" strokeWidth="1.600" /></Icon>
                  {l.on && <Selected />}
                </Targets>
              </Layer>
            ))}
          </LayerList>
          <PanelFooter $gap={7}>
            <span>2 图层</span>
            <Spacer />
            <Icon size={9}><path d="M6 2H1.500V10.500H10V6.500M5.500 6.500 11 1M7.500 1H11V4.500" /></Icon>
            <Lens size={9} />
            <Icon size={9}><rect x="1.500" y="1.500" width="7" height="7" /><circle cx="7.500" cy="7.500" r="3" fill="currentColor" /></Icon>
            <Icon size={10}><path d="M.5 2V5H4M2.500 3.500 4 5 2.500 6.500M5 3H11.500V10H5ZM8.200 4.500V8.500M6.300 6.500H10" /></Icon>
            <Icon size={9}><path d="M1 1H11V11H1ZM6 3.500V8.500M3.500 6H8.500" /></Icon>
            <Trash />
          </PanelFooter>
        </Panels>
      </Workspace>

      <ColorPanel>
        <PanelTabs>
          <PanelTab $on>⬨ 颜色</PanelTab>
          <PanelMenu aria-label="折叠"><Double flip /></PanelMenu>
          <FloatMenu aria-label="面板菜单"><Lines size={7} /></FloatMenu>
        </PanelTabs>
        <ColorBody>
          <svg width="26" height="76" viewBox="0 0 26 76" aria-hidden="true">
            <path d="M0 1H5V5H0Z" fill="#fff" />
            <path d="M3 3.500H7V7.500H3Z" fill="#222" stroke="#ddd" />
            <path d="M13 3H16C18 3 18 4 18 7M15 1 13 3 15 5M16 5.500 18 7.500 20 5.500" fill="none" stroke="#c6c6c6" />
            <rect x=".5" y="12.500" width="10" height="10" fill="#000" stroke="#aaa" />
            <rect x="6" y="18" width="11" height="11" fill="#fff" />
            <rect x="9" y="21" width="5" height="5" fill="#5a5a5a" />
            <path d="M6.500 28.500 16.500 18.500" stroke="#e8301f" strokeWidth="1.400" />
            <path d="M8 58H6V53M4 55 6 53 8 55" fill="none" stroke="#ccc" />
            <rect x="15.500" y="52.500" width="7" height="7" fill="#000" stroke="#bbb" />
            <path d="M0 67H8V75H0Z" fill="#fff" />
            <path d="M.5 74.500 7.500 67.500" stroke="#e8301f" strokeWidth="1.400" />
            <path d="M8 67H16V75H8Z" fill="#000" />
            <path d="M16 67H24V75H16Z" fill="#fff" />
          </svg>
          <Channels>
            {["C", "M", "Y", "K"].map((c) => (
              <Channel key={c}>
                <span>{c}</span>
                <Slider type="range" aria-label={`${c} 滑块`} />
                <Amount aria-label={c} />
                <span>%</span>
              </Channel>
            ))}
          </Channels>
        </ColorBody>
        <Spectrum />
        <PanelFoot><Grip /></PanelFoot>
      </ColorPanel>

      <Menu role="menu" $x={205} $y={14} $w={181}><Entries items={selectMenu} /></Menu>
      <Menu role="menu" $x={385} $y={123} $w={137}><Entries items={sameMenu} /></Menu>
      <Marker $x={202} $y={119} $w={182} $h={20} />
      <Marker $x={382} $y={192} $w={140} $h={18} />
      <Pointer width="9" height="12" viewBox="0 0 9 12" aria-hidden="true">
        <path d="M1 1V9.500L3 7.800 4.500 11 5.700 10.400 4.300 7.300H7Z" fill="#fff" stroke="#777" strokeWidth=".8" />
      </Pointer>

      <Monitor>
        <Reading $w={17}>FPS</Reading>
        <Reading $w={7} $tone="value">--</Reading>
        <Reading $w={14} $tone="faint">FPS</Reading>
        <Reading $w={18}>GPU</Reading>
        <Reading $w={66} $tone="value">0%/1800RPM/1%</Reading>
        <Reading $w={17} $tone="faint">M/ 0</Reading>
        <Reading $w={18}>CPU</Reading>
        <Reading $w={43} $tone="value">1.84GHz</Reading>
        <Reading $w={26}>DRAM</Reading>
        <Reading $w={34} $tone="value">4800MHz</Reading>
        <Reading $w={15}>MHz</Reading>
      </Monitor>

      <TaskBar>
        <Weather>
          <svg width="17" height="18" viewBox="0 0 17 18" aria-hidden="true">
            <path d="M12 6C14 11 10 17 3 15 8 14 10 11 9 7Z" fill="#f6a127" stroke="#f6a127" strokeWidth="2" />
            <path d="M0 8C0 6 2 6 2 6 3 3 7 3 8 6 10 6 10 9 8 9H2C1 9 0 9 0 8Z" fill="#b9d3f7" />
            <circle cx="11.500" cy="4.500" r="4.500" fill="#f08e8b" />
            <path d="M10.500 3.500 11.700 2.500V7" fill="none" stroke="#5a1f1f" strokeWidth=".8" />
          </svg>
          <div>1°C<br />大部晴朗</div>
        </Weather>

        <Apps>
          <AppButton aria-label="开始"><svg width="15" height="15" viewBox="0 0 15 15"><path d="M0 0H7V7H0ZM8 0H15V7H8ZM0 8H7V15H0ZM8 8H15V15H8Z" fill="#35b6f4" /></svg></AppButton>
          <Search>
            <Lens />
            <input placeholder="搜索" aria-label="搜索" />
            <svg width="31" height="16" viewBox="0 0 31 16" aria-hidden="true">
              <path d="M12 8C16 4 29 4 30 8S26 15 20 14 11 13 12 8Z" fill="#6f9fd0" />
              <path d="M13 11C17 8 20 11 26 8 25 13 17 14 13 11Z" fill="#d9503f" />
              <path d="M21 2V9H24Z" fill="#1e5a96" />
              <circle cx="4" cy="9" r="3" fill="#d8433c" /><circle cx="8" cy="12" r="3" fill="#e25a50" />
              <path d="M3 7 5 1 7 9M5 3 9 5" stroke="#3d8b45" strokeWidth="1.300" fill="none" />
            </svg>
          </Search>
          <AppButton aria-label="任务视图"><svg width="15" height="14" viewBox="0 0 15 14"><rect x="4" width="11" height="9" rx="1" fill="#eee" /><rect y="4" width="10" height="9" rx="1" fill="#777" /><path d="M4 4H10V9H4Z" fill="#b8b8b8" /></svg></AppButton>
          <AppButton aria-label="文件资源管理器" $dot><svg width="15" height="14" viewBox="0 0 15 14"><path d="M0 1H5L7 3H15V13H0Z" fill="#f7c03c" /><path d="M2 9H13V14H2Z" fill="#1877c9" /></svg></AppButton>
          <AppButton aria-label="Edge"><svg width="15" height="15" viewBox="0 0 15 15"><circle cx="7.500" cy="7.500" r="7.300" fill="#1573c4" /><path d="M.5 6C2-1 13-1 14.700 6.500 15 10 10 10 9 9 10 7 8 4.500 5 4.500 3 4.500 1.500 5 .5 6Z" fill="#49cfa2" /><path d="M.5 6C2 1 7-.5 10 1 6 1 3 3 .5 6Z" fill="#3db0e8" /><path d="M9 9C10 7 8.500 5.800 7 6 5 6.500 4.500 9 6 11.500 8 13.500 11 13 13 11.500 11 12 9 11 9 9Z" fill="#14345f" /></svg></AppButton>
          <AppButton aria-label="Microsoft Store"><svg width="14" height="15" viewBox="0 0 14 15"><path d="M4 3V.8H10V3" fill="none" stroke="#3cb7f2" /><rect y="2.500" width="14" height="12" rx="1.500" fill="#f2f2f2" /><path d="M3.500 5H6.500V8H3.500Z" fill="#f25022" /><path d="M7.500 5H10.500V8H7.500Z" fill="#7fba00" /><path d="M3.500 9H6.500V12H3.500Z" fill="#00a4ef" /><path d="M7.500 9H10.500V12H7.500Z" fill="#ffb900" /></svg></AppButton>
          <AppButton aria-label="游戏中心"><svg width="14" height="15" viewBox="0 0 14 15"><rect width="14" height="15" rx="2" fill="#0d1014" /><path d="M2 3 7 7 12 3M3 5 4 11 7 13 10 11 11 5M7 7V13M5 3 7 5 9 3" fill="none" stroke="#8e959c" strokeWidth="1.200" /></svg></AppButton>
          <AppButton aria-label="浏览器"><svg width="15" height="14" viewBox="0 0 15 14"><path d="M3 8C7 8 13 7 12 4S4 .5 3 6.500 9 14 13 9.500" fill="none" stroke="#1aa6f2" strokeWidth="2.600" /><path d="M0 11C4 12 12 8 15 2" fill="none" stroke="#1179d6" strokeWidth="1.400" /></svg></AppButton>
          <AppButton aria-label="应用商店"><svg width="13" height="14" viewBox="0 0 13 14"><rect y="1" width="13" height="13" rx="1" fill="#12b76a" /><path d="M3 6C4 9.500 9 9.500 10 6" fill="none" stroke="#fff" strokeWidth="1.400" /></svg></AppButton>
          <AppButton aria-label="微信" $dot><svg width="16" height="14" viewBox="0 0 16 14"><ellipse cx="6" cy="5" rx="6" ry="5" fill="#22b14c" /><ellipse cx="11" cy="9" rx="5" ry="4.200" fill="#e6e6e6" /><path d="M3.500 4H4.800M7.200 4H8.500M9 8.500H10M12 8.500H13" stroke="#14532d" strokeWidth="1.200" /></svg></AppButton>
          <AppButton aria-label="Word" $dot><svg width="15" height="14" viewBox="0 0 15 14"><rect x="4" width="11" height="13" rx="1" fill="#2f7bd9" /><path d="M4 6H15V13H4Z" fill="#1c50a8" /><rect y="3" width="8" height="8" rx="1" fill="#164a9c" /><path d="M1.500 5 2.700 9 4 5.500 5.300 9 6.500 5" fill="none" stroke="#fff" /></svg></AppButton>
          <AppButton aria-label="Illustrator" $on><AiBadge>Ai</AiBadge></AppButton>
        </Apps>

        <Tray>
          <Chevron d="up" size={8} />
          <Icon size={10}><path d="M2 9.500C-.5 9 0 5.500 2.500 5.500 4 2 8 2.500 8.500 5.500 12 5 13 9 10.500 9.500Z" {...solid} /></Icon>
          <Mic><Icon size={10}><rect x="4" y="0" width="4" height="7" rx="2" fill="currentColor" /><path d="M2 5C2 10 10 10 10 5M6 9V12" /></Icon></Mic>
          <span>中</span>
          <Quick>
            <Icon size={10}><path d="M1 5C4 2 8 2 11 5M3 7C5 5.300 7 5.300 9 7" strokeWidth="1.200" /><circle cx="6" cy="9" r="1.200" {...solid} /></Icon>
            <Icon size={10}><path d="M1 4.500H3L6 2V10L3 7.500H1ZM8 4.500C9 5.500 9 6.500 8 7.500M9.800 3C11.500 5 11.500 7 9.800 9" /></Icon>
            <Icon size={10}><path d="M1 4H11V10H1Z" {...solid} /><path d="M3 1V6" strokeWidth="2" /></Icon>
          </Quick>
          <Clock>22:25<br />2023/11/6</Clock>
          <Bell aria-label="通知"><Icon size={10}><path d="M1.500 9H10.500L9.300 7V4.500C9.300 0 2.700 0 2.700 4.500V7ZM4.500 10.500H7.500" /></Icon></Bell>
        </Tray>
      </TaskBar>
    </Desktop>
  );
}
